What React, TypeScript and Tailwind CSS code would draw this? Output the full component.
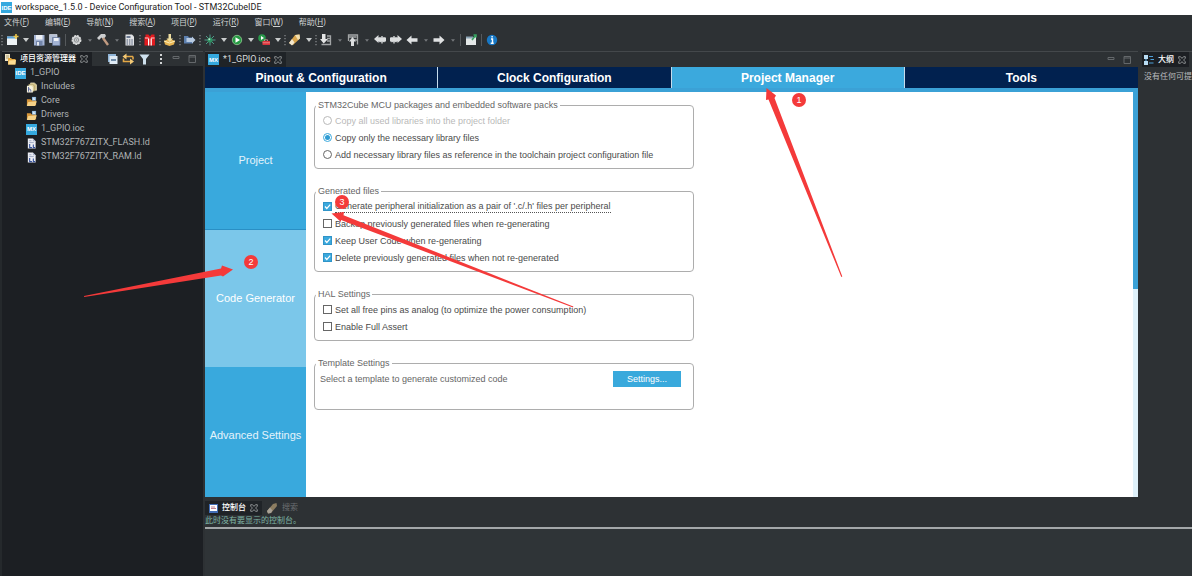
import type { ReactNode } from "react";

const UI = "font-[Roboto,'Noto_Sans_CJK_SC',sans-serif]";

function Svg({ children, label }: { children: ReactNode; label?: string }) {
  return (
    <svg viewBox="0 0 16 16" className="size-4 shrink-0" aria-label={label} aria-hidden={label ? undefined : true}>
      {children}
    </svg>
  );
}

function Tool({ label, children }: { label: string; children: ReactNode }) {
  return (
    <button type="button" title={label} className="flex size-4 shrink-0 items-center justify-center">
      <Svg>{children}</Svg>
    </button>
  );
}

function Caret({ dim = false }: { dim?: boolean }) {
  return (
    <button type="button" aria-label="More" className="flex h-4 w-[11px] shrink-0 items-center justify-center">
      <svg viewBox="0 0 6 4" className={dim ? "h-[3px] w-1 text-[#74787b]" : "h-1 w-[6px] text-[#c9cccd]"}>
        <path d="M0 0h6L3 4z" fill="currentColor" />
      </svg>
    </button>
  );
}

function Grip() {
  return (
    <svg viewBox="0 0 4 12" className="h-3 w-1 shrink-0" aria-hidden>
      <path d="M2 1v11" stroke="#8b8f92" strokeWidth="1.2" strokeDasharray="1.3 1.7" />
    </svg>
  );
}

function Divider() {
  return (
    <span className="flex w-[5px] shrink-0 justify-center">
      <span className="h-3 w-px bg-[#55595c]" />
    </span>
  );
}

function Logo({ text }: { text: string }) {
  return (
    <span className="flex size-[11px] shrink-0 items-center justify-center bg-[#35a9df] font-['Liberation_Sans',sans-serif] text-[6px] leading-none font-bold text-white">
      {text}
    </span>
  );
}

function Close() {
  return (
    <svg viewBox="0 0 8 8" className="size-2 shrink-0" aria-hidden>
      <path
        d="M.7.7h1.8L4 2.4 5.5.7h1.8v1.5L5.6 4l1.7 1.8v1.5H5.5L4 5.6 2.5 7.3H.7V5.8L2.4 4 .7 2.2z"
        fill="none"
        stroke="#a5a8aa"
        strokeWidth=".8"
      />
    </svg>
  );
}

function MinMax() {
  return (
    <>
      <Svg label="Minimize">
        <path d="M5 5.500h6v2H5z" fill="none" stroke="#64686b" />
      </Svg>
      <Svg label="Maximize">
        <path d="M5 4.500h6.500v7H5zM5 6h6.500" fill="none" stroke="#64686b" />
      </Svg>
    </>
  );
}

const menus = ["文件(F)", "编辑(E)", "导航(N)", "搜索(A)", "项目(P)", "运行(R)", "窗口(W)", "帮助(H)"];

function MenuBar() {
  return (
    <nav className="flex h-[14px] items-center gap-4 pl-1 text-[8px] leading-none text-[#cfd1d2]">
      {menus.map((m) => (
        <button key={m} type="button" className="font-['Noto_Sans','Noto_Sans_CJK_SC',sans-serif] whitespace-nowrap">
          {m.slice(0, 3)}
          <span className="underline">{m.slice(3, 4)}</span>
          {m.slice(4)}
        </button>
      ))}
    </nav>
  );
}

function ArrowShape() {
  return <path d="M2.500 8 7.500 3.500v2.700h6v3.600h-6v2.700z" fill="#e0e2e3" />;
}

function EditArrowShape() {
  return (
    <>
      <path d="M2 7 6.500 3v2.500H14v4H6.500V11z" fill="#dcdedf" />
      <path d="M10 4v7.500M7.500 5.500l5 4.500M12.500 5.500l-5 4.500" stroke="#dcdedf" strokeWidth="1.300" />
    </>
  );
}

function Toolbar() {
  return (
    <div className="flex h-[22px] items-center">
      <Grip />
      <Tool label="New">
        <path d="M3 4.500h10v8.500H3z" fill="#eef3f5" />
        <path d="M3 4.500h8v2H3z" fill="#5aa2d8" />
        <path d="M12 2v5M9.500 4.500h5" stroke="#e8c34a" strokeWidth="1.600" />
      </Tool>
      <Caret />
      <Tool label="Save">
        <path d="M3 3h10.500v10.500H3z" fill="#a3b3d3" />
        <path d="M5 3h6.500v4.500H5z" fill="#eef1f6" />
        <path d="M5 9h6.500v4.500H5z" fill="#7486aa" />
        <path d="M6 10h2v3.500H6z" fill="#e3e7ee" />
      </Tool>
      <Tool label="Save All">
        <path d="M2.500 2.500h7.500v8H2.500z" fill="#b5c0d6" stroke="#d7dde8" strokeWidth=".7" />
        <path d="M5.500 5.500H13v8H5.500z" fill="#a3b3d3" stroke="#5f7092" strokeWidth=".7" />
        <path d="M7 6h4.500v3H7z" fill="#eef1f6" />
      </Tool>
      <Divider />
      <Tool label="Build Configuration">
        <circle cx="8.500" cy="8" r="4.200" fill="#cfd1d2" stroke="#dcdede" strokeWidth="1.500" strokeDasharray="2 .8" />
        <circle cx="8.500" cy="8" r="2.200" fill="none" stroke="#85898b" strokeWidth=".9" />
        <circle cx="8.500" cy="8" r=".8" fill="#85898b" />
      </Tool>
      <Caret dim />
      <Tool label="Build">
        <path d="m2 6 4-4h4l1 2-1.500 2-1.500 1L6.500 5.500 4 8z" fill="#cdcfd0" />
        <path d="m8 6 5 7" stroke="#c09a80" strokeWidth="2.400" />
      </Tool>
      <Caret dim />
      <Tool label="Build Targets">
        <path d="M3.500 2.500h6.500L12 4.500v9H3.500z" fill="#e1e3e5" />
        <path d="M4.500 4h4v2h-4z" fill="#6a7890" />
        <path d="M4.500 8h6.500M4.500 10h6.500M4.500 12h6.500" stroke="#4c5a76" strokeWidth="1.200" strokeDasharray="1.500 .9" />
      </Tool>
      <Grip />
      <Tool label="Packages">
        <path d="M2.500 5h10.500v8.500H2.500zM3.500 2.500h3L8 4.500l1.500-2h3V5h-9z" fill="#e21b1f" />
        <path d="M3 6h3.500M9 6h3.500" stroke="#fff" strokeWidth=".8" />
        <path d="M6 6.500h1.200v7H6zM8.600 6.500h1.200v7H8.600z" fill="#fff" />
      </Tool>
      <Grip />
      <Tool label="Generate Code">
        <path d="M2 9 7.500 6.500 13 9l-1 3.500-4.500 1.500L3 12.500z" fill="#e8b552" />
        <path d="M6.500 2H9v4.500h2L7.800 10 4.500 6.500h2z" fill="#eddda0" />
        <path d="m2 9 5.500 2L13 9" fill="none" stroke="#fff0bc" />
      </Tool>
      <Grip />
      <Tool label="Open Element">
        <path d="M2 4h4l1 1.500h4v6H2z" fill="#5c7fae" />
        <path d="M4.500 6H10V4.500L13.500 8 10 11.500V10H4.500z" fill="#b8cbe2" />
      </Tool>
      <Grip />
      <Tool label="Debug">
        <path d="M8 2.500v11M2.500 8h11M4 4l8 8M12 4l-8 8" stroke="#4d9b89" strokeWidth="1" />
        <circle cx="8" cy="8" r="2.600" fill="#2f9161" />
        <circle cx="7.300" cy="7.300" r="1" fill="#b1e2c6" />
      </Tool>
      <Caret />
      <Tool label="Run">
        <circle cx="8" cy="8" r="4.700" fill="#259a43" stroke="#a5d4a2" strokeWidth=".7" />
        <path d="M6.500 5.200 11 8l-4.500 2.800z" fill="#fff" />
      </Tool>
      <Caret />
      <Tool label="External Tools">
        <circle cx="6" cy="6" r="3.800" fill="#28994a" />
        <path d="M5 4v4l3-2z" fill="#fff" />
        <path d="M6.500 9h7.500v4H6.500z" fill="#d8333a" />
        <path d="M8.500 9V7.800h3V9M6.500 10.800H14" fill="none" stroke="#f1a3a4" strokeWidth=".7" />
      </Tool>
      <Caret />
      <Grip />
      <Tool label="Search">
        <path d="m2 11 6-8 4.500-.5.5 4-7 6.500z" fill="#d9a54d" />
        <path d="m8 3 4.500-.5.500 4-2 1.500z" fill="#f0dfb0" />
        <path d="m2 11 3-4 2.500 3.500L5 13.500z" fill="#f3e8cf" />
      </Tool>
      <Caret />
      <Grip />
      <Tool label="Next Annotation">
        <path d="M9 4h3.500v8.500H3.500M9 6.500h3M9 9h3" fill="none" stroke="#a2a5a6" strokeWidth="1.300" />
        <path d="M4 2h3.500v5H10l-4.300 4.500L2 7h2z" fill="#e4e5e5" />
      </Tool>
      <Caret dim />
      <Tool label="Previous Annotation">
        <path d="M3.500 9V3h9v9.500M3.500 5h8M9 8h3" fill="none" stroke="#a2a5a6" strokeWidth="1.300" />
        <path d="M9 14V9.500h2L7.500 5 4 9.500h2V14z" fill="#dcdedf" />
      </Tool>
      <Caret dim />
      <Tool label="Last Edit Location">
        <EditArrowShape />
      </Tool>
      <Tool label="Next Edit Location">
        <g transform="matrix(-1 0 0 1 16 0)">
          <EditArrowShape />
        </g>
      </Tool>
      <Tool label="Back">
        <ArrowShape />
      </Tool>
      <Caret dim />
      <Tool label="Forward">
        <g transform="matrix(-1 0 0 1 16 0)">
          <ArrowShape />
        </g>
      </Tool>
      <Caret dim />
      <Divider />
      <Tool label="Pin Editor">
        <path d="M3 5h10v8H3z" fill="#e4e8e8" />
        <path d="M3 4.500h7v2H3z" fill="#8aa3b4" />
        <path d="m9 8 4-5M10.500 3H13v2.500" fill="none" stroke="#37a060" strokeWidth="1.600" />
      </Tool>
      <Divider />
      <Tool label="Information">
        <circle cx="8" cy="8" r="5.200" fill="#1778c6" />
        <path d="M7 7h1.500v4M6.700 11.200h3M7.400 4.800h1.400" fill="none" stroke="#fff" strokeWidth="1.400" />
      </Tool>
    </div>
  );
}

type Kind = "includes" | "folder" | "ioc" | "file";

function TreeIcon({ kind }: { kind: Kind }) {
  if (kind === "ioc") return <Logo text="MX" />;
  return (
    <svg viewBox="0 0 12 12" className="size-[11px] shrink-0" aria-hidden>
      {kind === "includes" && (
        <>
          <path d="M5 1h4l2.500 2v6H5z" fill="#d6c58b" stroke="#f5ecc8" strokeWidth=".7" />
          <path d="M3 2.500h4L9 4v6H3z" fill="#e3d6a2" stroke="#8b7c4b" strokeWidth=".5" />
          <path d="M1 4h4.500L7.500 5.500v6H1z" fill="#f6f2df" />
          <path d="M2.800 5.500v5M2.800 8q2.500-1.200 2.500 2.500" fill="none" stroke="#4d5b94" />
        </>
      )}
      {kind === "folder" && (
        <>
          <path d="M1 3.500h4l1 1.200h5V10H1z" fill="#d8973b" />
          <path d="m2.500 6.500 9.300-.700L10 10.800H.8z" fill="#f6d288" />
          <path d="M6.500 1H11v4H6.500z" fill="#8db7dc" />
          <path d="M9.800 2.300H8v1.500h1.800" fill="none" stroke="#fff" strokeWidth=".8" />
        </>
      )}
      {kind === "file" && (
        <>
          <path d="M2 .5h5.500L10.500 3.500v8H2z" fill="#eceef4" />
          <path d="M7.500.5v3h3" fill="#a8b2c9" />
          <path d="M3.500 3h2.500M3.500 5h5" stroke="#8592b3" strokeWidth=".8" />
          <path d="M4 6.500v4h2.500M8 7v3.500h2" fill="none" stroke="#36529a" strokeWidth="1.200" />
        </>
      )}
    </svg>
  );
}

const tree: { kind: Kind; name: string }[] = [
  { kind: "includes", name: "Includes" },
  { kind: "folder", name: "Core" },
  { kind: "folder", name: "Drivers" },
  { kind: "ioc", name: "1_GPIO.ioc" },
  { kind: "file", name: "STM32F767ZITX_FLASH.ld" },
  { kind: "file", name: "STM32F767ZITX_RAM.ld" },
];

function Explorer() {
  return (
    <aside className="flex w-[203px] shrink-0 flex-col border-l-2 border-[#25292c] bg-[#1c1f23]">
      <div className="flex h-[15px] items-center justify-between border-t border-[#44484b] bg-[#2d3134]">
        <div className="flex h-full items-center gap-1 bg-[#1c1f23] pr-1 pl-[2px] text-[8px] font-medium text-white">
          <svg viewBox="0 0 12 12" className="size-3 shrink-0" aria-hidden>
            <path d="M1 1h5v7H1z" fill="#f2e8c8" />
            <path d="M2 3h3M2 5h3" stroke="#8a7d55" strokeWidth=".7" />
            <path d="M4 5h3l1 1h3.500v5.500H4z" fill="#e6a93f" />
            <path d="m5 7.500 7-.500-.700 4.500H4z" fill="#fbdc93" />
          </svg>
          <span className="whitespace-nowrap">项目资源管理器</span>
          <Close />
        </div>
        <div className="flex items-center pr-[3px]">
          <Svg label="Collapse All">
            <path d="M4 3h8v8H4z" fill="#8fb4d6" />
            <path d="M5.500 5h8v8h-8z" fill="#dfeaf4" />
            <path d="M7 9h5" stroke="#31577f" strokeWidth="1.300" />
          </Svg>
          <Svg label="Link with Editor">
            <path d="M13 5.500H5M13 5.500v3M3.500 7.500v3h8" fill="none" stroke="#e3a846" strokeWidth="1.600" />
            <path d="M6.500 2.500v6l-4-3zM10 7.500v6l4-3z" fill="#f3c976" />
          </Svg>
          <Svg label="Filter">
            <path d="M3.500 3.500h10L10 8v5.500H7V8z" fill="#cfe1ee" />
          </Svg>
          <Svg label="View Menu">
            <path d="M8 3h2v2H8zM8 7h2v2H8zM8 11h2v2H8z" fill="#d2d4d5" />
          </Svg>
          <MinMax />
        </div>
      </div>
      <ul className="text-[9px] text-[#b0b3b5]">
        <li className="flex h-[14px] items-center gap-1 pl-[13px]">
          <Logo text="IDE" />
          1_GPIO
        </li>
        {tree.map((n) => (
          <li key={n.name} className="flex h-[14px] items-center gap-1 pl-6 whitespace-nowrap">
            <TreeIcon kind={n.kind} />
            {n.name}
          </li>
        ))}
      </ul>
    </aside>
  );
}

function Group({ title, children }: { title: string; children: ReactNode }) {
  return (
    <fieldset className="min-w-0 rounded border border-[#adadad] pb-[5px]">
      <legend className="ml-px h-3 px-[2px] text-[9px] leading-3 text-[#666]">{title}</legend>
      <div className="pt-px">{children}</div>
    </fieldset>
  );
}

function Choice({
  type = "checkbox",
  label,
  checked,
  disabled,
  focused,
}: {
  type?: "checkbox" | "radio";
  label: string;
  checked?: boolean;
  disabled?: boolean;
  focused?: boolean;
}) {
  const radio = type === "radio";
  return (
    <label className={`flex h-[17px] items-center gap-[3px] pl-2 text-[9px] ${disabled ? "text-[#b9b9b9]" : "text-[#4a4a4a]"}`}>
      <span className="grid size-[9px] shrink-0 place-items-center">
        <input
          type={type}
          name={radio ? "library-copy" : undefined}
          defaultChecked={checked}
          disabled={disabled}
          className={
            radio
              ? "peer col-start-1 row-start-1 size-[9px] appearance-none rounded-full border border-[#666] bg-white checked:border-[#3ba9dd] disabled:border-[#b9b9b9]"
              : "peer col-start-1 row-start-1 size-[9px] appearance-none border border-[#666] bg-white checked:border-[#3094c8] checked:bg-[#3ba9dd]"
          }
        />
        {radio ? (
          <span className="pointer-events-none col-start-1 row-start-1 hidden size-[5px] rounded-full bg-[#2f9cd3] peer-checked:block" />
        ) : (
          <svg viewBox="0 0 9 9" className="pointer-events-none col-start-1 row-start-1 hidden size-[9px] peer-checked:block" aria-hidden>
            <path d="m2 4.500 1.800 2L7.200 2.700" fill="none" stroke="#fff" strokeWidth="1.200" />
          </svg>
        )}
      </span>
      <span className={focused ? "border-b border-dotted border-[#555] leading-3" : "leading-3"}>{label}</span>
    </label>
  );
}

function CodeGenerator() {
  return (
    <form className="flex w-[388px] flex-col gap-4 pt-[7px] pl-2">
      <Group title="STM32Cube MCU packages and embedded software packs">
        <Choice type="radio" label="Copy all used libraries into the project folder" disabled />
        <Choice type="radio" label="Copy only the necessary library files" checked />
        <Choice type="radio" label="Add necessary library files as reference in the toolchain project configuration file" />
      </Group>
      <Group title="Generated files">
        <Choice label="Generate peripheral initialization as a pair of '.c/.h' files per peripheral" checked focused />
        <Choice label="Backup previously generated files when re-generating" />
        <Choice label="Keep User Code when re-generating" checked />
        <Choice label="Delete previously generated files when not re-generated" checked />
      </Group>
      <Group title="HAL Settings">
        <Choice label="Set all free pins as analog (to optimize the power consumption)" />
        <Choice label="Enable Full Assert" />
      </Group>
      <Group title="Template Settings">
        <div className="flex items-center justify-between pt-px pr-3 pb-[17px] pl-[5px] text-[9px] leading-4 text-[#666]">
          <span>Select a template to generate customized code</span>
          <button type="button" className="h-4 w-[68px] bg-[#39a9dc] text-white">
            Settings...
          </button>
        </div>
      </Group>
    </form>
  );
}

const tabs = ["Pinout & Configuration", "Clock Configuration", "Project Manager", "Tools"];
const sections = ["Project", "Code Generator", "Advanced Settings"];

function Editor() {
  return (
    <section className="flex flex-1 flex-col font-['Liberation_Sans',sans-serif]">
      <div className={`flex h-4 items-center justify-between border-t border-[#44484b] ${UI}`}>
        <div className="flex h-full items-center gap-1 bg-[#1f2327] pr-1 pl-[3px] text-[9px] text-[#d9dbdc]">
          <Logo text="MX" />
          *1_GPIO.ioc
          <Close />
        </div>
        <div className="flex items-center pr-[3px]">
          <MinMax />
        </div>
      </div>
      <nav className="grid h-[21px] grid-cols-4 bg-[#01214f] text-[12px] font-bold text-white">
        {tabs.map((t) => (
          <button
            key={t}
            type="button"
            className={
              t === "Project Manager"
                ? "border-r border-[#c6dcec] bg-[#3ba9dd]"
                : "border-r border-[#c6dcec] last:border-r-0"
            }
          >
            {t}
          </button>
        ))}
      </nav>
      <div className="flex flex-1 border-t-4 border-[#3ba1d6] bg-white">
        <nav className="flex h-0 min-h-full w-[101px] shrink-0 flex-col overflow-hidden bg-[#39a9dd]">
          {sections.map((s) => (
            <button
              key={s}
              type="button"
              className={
                s === "Code Generator"
                  ? "h-[138px] shrink-0 border-t border-[#2a8fc4] bg-[#7bc7ea] text-[11px] whitespace-nowrap text-white"
                  : "h-[137px] shrink-0 text-[11px] whitespace-nowrap text-[#e4f3fb]"
              }
            >
              {s}
            </button>
          ))}
        </nav>
        <div className="flex-1">
          <CodeGenerator />
        </div>
        <div className="w-[5px] bg-[#dff1fa]">
          <div className="h-[197px] bg-[#3ba1d6]" />
        </div>
      </div>
    </section>
  );
}

function ConsolePanel() {
  return (
    <section className="mt-1 flex h-[75px] flex-col text-[8px]">
      <div className="flex h-[14px] items-center">
        <div className="flex h-full items-center gap-1 bg-[#1f2327] px-1 font-medium text-white">
          <svg viewBox="0 0 9 9" className="size-[9px]" aria-hidden>
            <path d="M0 0h9v9H0z" fill="#416db5" />
            <path d="M1 1h7v6H1z" fill="#fff" />
            <path d="M2 3h4M2 4.500h5" stroke="#af6578" strokeWidth=".8" />
          </svg>
          控制台
          <Close />
        </div>
        <div className="flex items-center gap-1 pl-1 text-[#6a6e71]">
          <svg viewBox="0 0 12 12" className="size-3" aria-hidden>
            <path d="m1 9 6-7 3.500-1L11 4l-6 7-3 .500z" fill="#8c7d61" />
            <path d="m1 9 3-3.500L6.500 8.500 5 11l-3 .500z" fill="#a8a196" />
          </svg>
          搜索
        </div>
      </div>
      <p className="h-3 leading-3 text-[#7fb5a5]">此时没有要显示的控制台。</p>
      <div className="h-[2px] bg-[#a3a7a9]" />
      <div className="flex-1 bg-[#2f3437]" />
    </section>
  );
}

function Outline() {
  return (
    <aside className="ml-1 w-[50px] shrink-0 overflow-hidden border-t border-[#44484b] text-[8px] whitespace-nowrap">
      <div className="flex h-[15px] w-[47px] items-center gap-1 bg-[#1c1f23] pl-[2px] font-medium text-white">
        <svg viewBox="0 0 10 10" className="size-[10px] shrink-0" aria-hidden>
          <path d="M0 0h4v4H0zM0 6h4v4H0z" fill="#b9dcf3" />
          <path d="M2 4v2M5 1.500h4M6.500 4.500H10M5 8h4.500" stroke="#4d9fd8" strokeWidth="1.200" />
        </svg>
        大纲
        <Close />
      </div>
      <p className="pt-1 pl-[2px] leading-3 text-[#b9bcbe]">没有任何可提</p>
    </aside>
  );
}

function Annotations() {
  const badges = [
    { x: 799, y: 100, n: 1 },
    { x: 251, y: 262, n: 2 },
    { x: 342, y: 202, n: 3 },
  ];
  return (
    <svg className="pointer-events-none absolute inset-0 size-full font-['Liberation_Sans',sans-serif]" aria-hidden>
      <g fill="#f43a3a">
        <path d="M766.500 88 776 95.500 774.500 98 842.300 276.500 841.300 277 768.500 99.500 766 100z" />
        <path d="M233 269.500 222 265.500 221 268.500 84 296 84.200 297 221 275.500 223 276.500z" />
        <path d="M331.500 213.500 344 212 343.500 215.200 573.300 306.600 573 307.400 341 220 341 222z" />
      </g>
      {badges.map((b) => (
        <g key={b.n}>
          <circle cx={b.x} cy={b.y} r="7" fill="#f43a3a" />
          <text x={b.x} y={b.y + 3} textAnchor="middle" fontSize="9" fill="#fff">
            {b.n}
          </text>
        </g>
      ))}
    </svg>
  );
}

export default function App() {
  return (
    <div className={`relative flex min-h-screen flex-col overflow-hidden bg-[#2d3134] ${UI}`}>
      <header className="flex h-[15px] items-center gap-[3px] bg-white pl-px text-[9px] text-[#1c1c1c]">
        <Logo text="IDE" />
        <h1>workspace_1.5.0 - Device Configuration Tool - STM32CubeIDE</h1>
      </header>
      <MenuBar />
      <Toolbar />
      <div className="flex flex-1">
        <Explorer />
        <main className="ml-[2px] flex min-w-0 flex-1 flex-col">
          <div className="flex flex-1">
            <Editor />
          </div>
          <div className="-mr-[54px]">
            <ConsolePanel />
          </div>
        </main>
        <Outline />
      </div>
      <Annotations />
    </div>
  );
}
